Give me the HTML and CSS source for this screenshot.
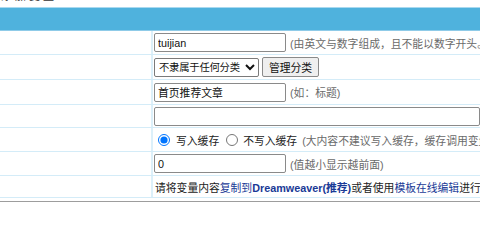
FILE: index.html
```html
<!DOCTYPE html>
<html>
<head>
<meta charset="utf-8">
<link rel="stylesheet" href="styles.css">
</head>
<body>
<div class="top"><div class="top-clip"><span class="top-text">添加变量 ：</span></div></div>
<div class="panel">
  <div class="head"></div>
  <div class="row r1">
    <div class="label"></div>
    <div class="field">
      <input class="txt" type="text" value="tuijian">
      <span class="hint">(由英文与数字组成，且不能以数字开头。</span>
    </div>
  </div>
  <div class="row r2">
    <div class="label"></div>
    <div class="field">
      <select class="sel"><option>不隶属于任何分类</option></select>
      <button class="btn">管理分类</button>
    </div>
  </div>
  <div class="row r3">
    <div class="label"></div>
    <div class="field">
      <input class="txt" type="text" value="首页推荐文章">
      <span class="hint">(如：标题)</span>
    </div>
  </div>
  <div class="row r4">
    <div class="label"></div>
    <div class="field">
      <input class="txt wide" type="text" value="">
    </div>
  </div>
  <div class="row r5">
    <div class="label"></div>
    <div class="field">
      <label class="opt first"><input type="radio" name="c" checked>写入缓存</label>
      <label class="opt second"><input type="radio" name="c">不写入缓存</label>
      <span class="hint h5">(大内容不建议写入缓存，缓存调用变量时会更快)</span>
    </div>
  </div>
  <div class="row r6">
    <div class="label"></div>
    <div class="field">
      <input class="txt" type="text" value="0">
      <span class="hint">(值越小显示越前面)</span>
    </div>
  </div>
  <div class="row r7">
    <div class="label"></div>
    <div class="field note">请将变量内容<a class="lk">复制到<b>Dreamweaver(推荐)</b></a>或者使用<a class="lk">模板在线编辑</a>进行可视化编辑</div>
  </div>
</div>
<div class="foot"></div>
</body>
</html>
```
FILE: styles.css
```css
html, body { margin: 0; padding: 0; background: #fff; }
body {
  width: 480px;
  height: 248px;
  overflow: hidden;
  font-family: "Liberation Sans", "Noto Sans CJK SC", sans-serif;
  font-size: 10.8px;
  color: #222;
}
.top {
  height: 7px;
}
.top-clip {
  height: 2px;
  overflow: hidden;
}
.top-text {
  display: block;
  margin-top: -10px;
  padding-left: 1px;
  font-size: 11px;
  line-height: 12px;
  color: #333;
  white-space: nowrap;
  letter-spacing: 3px;
}
.head {
  height: 22px;
  background: #4fb2dd;
  border-top: 1px solid #a9d9ef;
  border-bottom: 1px solid #8fcbe8;
}
.row {
  display: flex;
  border-bottom: 1px solid #d4ecf8;
  overflow: hidden;
}
.r1 { height: 23px; }
.r2 { height: 24px; }
.r3 { height: 24px; }
.r4 { height: 22px; }
.r5 { height: 23px; }
.r6 { height: 23px; }
.r7 { height: 21px; }
.label {
  width: 151px;
  flex: none;
  border-right: 2px solid #dcf0fa;
}
.field {
  flex: 1;
  display: flex;
  align-items: center;
  padding-left: 1px;
  white-space: nowrap;
  min-width: 0;
}
.txt {
  box-sizing: border-box;
  width: 132px;
  height: 19px;
  margin: 0;
  padding: 0 3px;
  border: 1px solid #8a8a8a;
  border-radius: 2px;
  font-family: "Liberation Sans", "Noto Sans CJK SC", sans-serif;
  font-size: 10.8px;
  color: #111;
  background: #fff;
}
.txt.wide { width: 340px; }
.hint {
  color: #6a6a6a;
  margin-left: 4px;
}
.sel {
  box-sizing: border-box;
  width: 105px;
  height: 19px;
  margin: 0;
  padding: 0;
  border: 1px solid #7a7a7a;
  border-radius: 2px;
  font-family: "Liberation Sans", "Noto Sans CJK SC", sans-serif;
  font-size: 10.3px;
  letter-spacing: -0.2px;
  color: #111;
  background: #fff;
}
.btn {
  box-sizing: border-box;
  height: 20px;
  width: 57px;
  margin: 0 0 0 3px;
  padding: 0;
  border: 1px solid #8a8a8a;
  border-radius: 2px;
  background: #efefef;
  font-family: "Liberation Sans", "Noto Sans CJK SC", sans-serif;
  font-size: 10.8px;
  color: #111;
}
.opt {
  display: flex;
  align-items: center;
}
.opt input {
  width: 12px;
  height: 12px;
  margin: 0;
}
.opt.first { margin-left: 4px; }
.opt.first input { margin-right: 6px; }
.opt.second { margin-left: 7px; }
.opt.second input { margin-right: 5px; }
.hint.h5 { margin-left: 5px; }
.note { padding-left: 2px; color: #222; }
.lk { color: #1a3a96; }
.lk b { font-weight: bold; }
.foot {
  margin-top: 3px;
  border-top: 1px solid #9d9d9d;
}
```
